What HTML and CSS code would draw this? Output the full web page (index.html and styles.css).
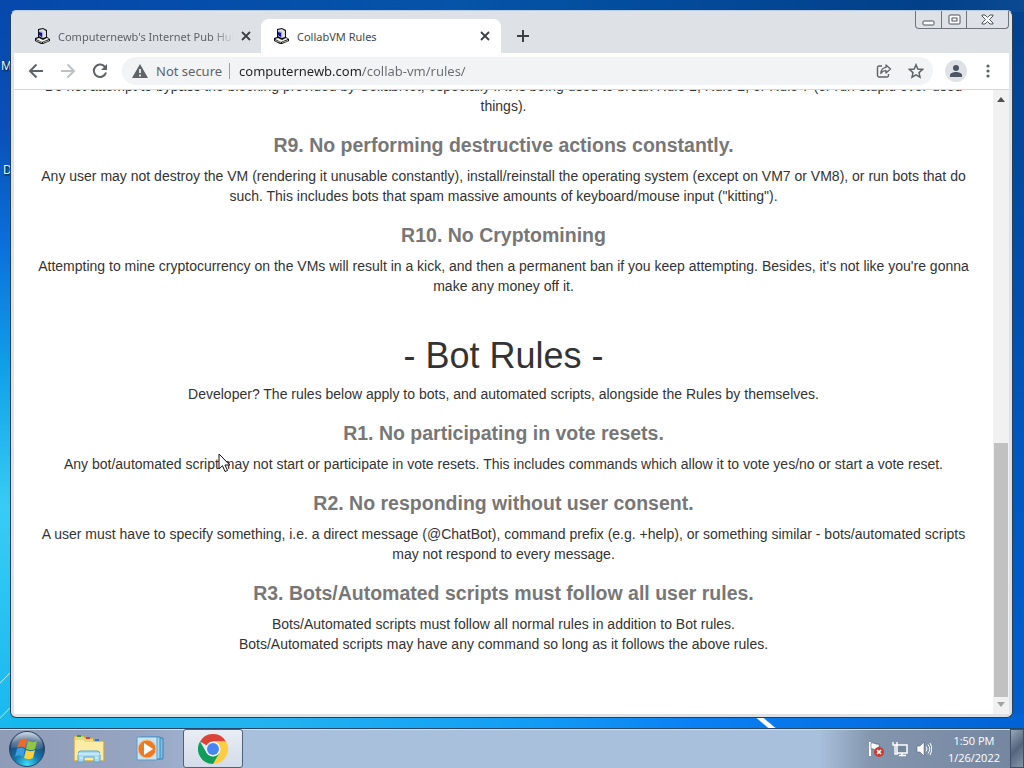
FILE: index.html
```
<!DOCTYPE html>
<html lang="en">
<head>
    <meta charset="UTF-8">
    <meta name="viewport" content="width=device-width, initial-scale=1.0">
    <title>CollabVM Rules</title>
    <link rel="stylesheet" href="styles.css">
</head>
<body>
    <svg width="0" height="0" class="defs" aria-hidden="true">
        <symbol id="pc" viewBox="0 0 16 16">
            <path d="M4 1l5-1 4 2v7l3 2v2l-7 3h-2l-6-3v-3l3-1z" fill="#111"/>
            <path d="M5 2l4-1 3 2v6l-3 1-4-2z" fill="#dcdce4"/>
            <path d="M5 3l4 1v6L5 8z" fill="#a8aad0"/>
            <path d="M5 4l3 1v4L5 7z" fill="#1010a8"/>
            <path d="M2 11l3-1 4 2 4-2 2 1-7 3z" fill="#f4f4f0"/>
            <path d="M2 12l6 2v1l-6-2zM9 14l6-2v1l-6 2z" fill="#b4b4ae"/>
        </symbol>
        <symbol id="close" viewBox="0 0 10 10">
            <path d="M1 1l8 8M9 1L1 9" stroke="#3c4043" stroke-width="1.8"/>
        </symbol>
    </svg>

    <span class="deskLabel labelTop">My</span>
    <span class="deskLabel labelLow">Do</span>

    <div class="window">
        <header class="tabStrip">
            <div class="tab">
                <svg class="favicon"><use href="#pc"/></svg>
                <span class="tabTitle">Computernewb's Internet Pub Hub</span>
                <button class="tabClose" aria-label="Close tab"><svg width="10" height="10"><use href="#close"/></svg></button>
            </div>
            <div class="tab active">
                <svg class="favicon"><use href="#pc"/></svg>
                <span class="tabTitle">CollabVM Rules</span>
                <button class="tabClose" aria-label="Close tab"><svg width="10" height="10"><use href="#close"/></svg></button>
            </div>
            <button class="newTab" aria-label="New tab">
                <svg width="12" height="12" viewBox="0 0 12 12"><path d="M6 0v12M0 6h12" stroke="#3c4043" stroke-width="2"/></svg>
            </button>
            <div class="caption">
                <button aria-label="Minimize"><svg width="13" height="17"><rect x="1" y="10" width="11" height="4" rx="1" fill="#fff" stroke="#4c535c"/></svg></button>
                <button aria-label="Maximize"><svg width="13" height="17"><rect x="1" y="4" width="11" height="9" rx="1" fill="#fff" stroke="#4c535c"/><rect x="4" y="7" width="5" height="3" fill="#fff" stroke="#4c535c"/></svg></button>
                <button class="wide" aria-label="Close"><svg width="13" height="17"><path d="M1 4h3l2.500 2.500L9 4h3v1L8.500 8.500 12 12v1H9l-2.500-2.500L4 13H1v-1l3.500-3.500L1 5z" fill="#fff" stroke="#4c535c"/></svg></button>
            </div>
        </header>

        <nav class="toolbar">
            <button aria-label="Back"><svg width="16" height="16" viewBox="0 0 16 16"><path d="M15 8H2M8.500 1.500L2 8l6.500 6.500" fill="none" stroke="#5f6368" stroke-width="2"/></svg></button>
            <button aria-label="Forward"><svg width="16" height="16" viewBox="0 0 16 16"><path d="M1 8h13M7.500 1.500L14 8l-6.500 6.500" fill="none" stroke="#bdc1c6" stroke-width="2"/></svg></button>
            <button aria-label="Reload"><svg width="16" height="16" viewBox="0 0 16 16"><path d="M13.300 4.500A6.200 6.200 0 1 0 14 9.500" fill="none" stroke="#5f6368" stroke-width="2"/><path d="M15 1v6H9z" fill="#5f6368"/></svg></button>
            <div class="omnibox">
                <svg width="16" height="14" viewBox="0 0 16 14"><path d="M8 0l8 14H0z" fill="#5f6368"/><path d="M8 5v4M8 10.500v2" stroke="#fff" stroke-width="1.600"/></svg>
                <label class="secure" for="url">Not secure</label>
                <input type="text" id="url" value="computernewb.com/collab-vm/rules/">
                <button aria-label="Share"><svg width="16" height="16" viewBox="0 0 16 16"><path d="M6 3H3a1.500 1.500 0 0 0-1.500 1.500v8A1.500 1.500 0 0 0 3 14h8a1.500 1.500 0 0 0 1.500-1.500V11" fill="none" stroke="#5f6368" stroke-width="1.400"/><path d="M10 2l4.500 4L10 10V7.700C7.500 7.700 6 8.600 4.800 10.500 5 7.500 6.500 4.800 10 4.400z" fill="none" stroke="#5f6368" stroke-width="1.300" stroke-linejoin="round"/></svg></button>
                <button aria-label="Bookmark this tab"><svg width="16" height="16" viewBox="0 0 16 16"><path d="M8 1.800l1.800 4.300 4.700.4-3.500 3.100 1 4.600L8 11.800l-4 2.400 1-4.600L1.500 6.500l4.700-.4z" fill="none" stroke="#5f6368" stroke-width="1.500"/></svg></button>
            </div>
            <button class="avatar" aria-label="Profile"><svg width="22" height="22" viewBox="0 0 22 22"><circle cx="11" cy="11" r="11" fill="#dee1e6"/><circle cx="11" cy="8" r="3" fill="#4b5563"/><path d="M5 17v-2c0-2 3.500-3 6-3s6 1 6 3v2z" fill="#4b5563"/></svg></button>
            <button aria-label="Menu"><svg width="4" height="16" viewBox="0 0 4 16"><g fill="#5f6368"><circle cx="2" cy="3" r="1.600"/><circle cx="2" cy="8" r="1.600"/><circle cx="2" cy="13" r="1.600"/></g></svg></button>
        </nav>

        <div class="viewport">
            <main class="content">
                <p>Do not attempt to bypass the blocking provided by CollabNet, especially if it is being used to break Rule 1, Rule 2, or Rule 7 (or run stupid over-used things).</p>
                <h2><small>R9. No performing destructive actions constantly.</small></h2>
                <p>Any user may not destroy the VM (rendering it unusable constantly), install/reinstall the operating system (except on VM7 or VM8), or run bots that do such. This includes bots that spam massive amounts of keyboard/mouse input ("kitting").</p>
                <h2><small>R10. No Cryptomining</small></h2>
                <p>Attempting to mine cryptocurrency on the VMs will result in a kick, and then a permanent ban if you keep attempting. Besides, it's not like you're gonna make any money off it.</p>
                <h1>- Bot Rules -</h1>
                <p>Developer? The rules below apply to bots, and automated scripts, alongside the Rules by themselves.</p>
                <h2><small>R1. No participating in vote resets.</small></h2>
                <p>Any bot/automated script may not start or participate in vote resets. This includes commands which allow it to vote yes/no or start a vote reset.</p>
                <h2><small>R2. No responding without user consent.</small></h2>
                <p>A user must have to specify something, i.e. a direct message (@ChatBot), command prefix (e.g. +help), or something similar - bots/automated scripts may not respond to every message.</p>
                <h2><small>R3. Bots/Automated scripts must follow all user rules.</small></h2>
                <p>Bots/Automated scripts must follow all normal rules in addition to Bot rules.<br>Bots/Automated scripts may have any command so long as it follows the above rules.</p>
            </main>
            <div class="scrollbar">
                <svg width="8" height="5"><path d="M0 5l4-5 4 5z" fill="#505050"/></svg>
                <div class="track"><div class="thumb"></div></div>
                <svg width="8" height="5"><path d="M0 0l4 5 4-5z" fill="#a3a3a3"/></svg>
            </div>
        </div>
    </div>

    <footer class="taskbar">
        <button class="start" aria-label="Start">
            <svg width="38" height="38" viewBox="0 0 38 38">
                <defs>
                    <radialGradient id="orb" cx=".5" cy=".95" r=".9">
                        <stop offset="0" stop-color="#3fe0fa"/>
                        <stop offset=".4" stop-color="#1477ae"/>
                        <stop offset=".8" stop-color="#1d4470"/>
                        <stop offset="1" stop-color="#6e8ba8"/>
                    </radialGradient>
                    <linearGradient id="gloss" x2="0" y2="1">
                        <stop offset="0" stop-color="#fff" stop-opacity=".6"/>
                        <stop offset="1" stop-color="#fff" stop-opacity=".1"/>
                    </linearGradient>
                </defs>
                <circle cx="19" cy="19" r="17.500" fill="url(#orb)" stroke="#2b4562"/>
                <path d="M3 18a16 16 0 0 1 32 0c-8 4-20-3-32 0z" fill="url(#gloss)"/>
                <path d="M12 10c3-2 5-1 7 0l-2 8c-3-2-5-2-8 0z" fill="#ee6a28"/>
                <path d="M20 11c3 1 5 2 9 0l-2 8c-3 2-6 1-9 0z" fill="#91c644"/>
                <path d="M9 19c3-2 5-1 8 0l-2 8c-3-2-5-2-8 0z" fill="#3b9be4"/>
                <path d="M18 20c3 1 5 2 9 0l-2 8c-4 2-6 1-9 0z" fill="#fcd03c"/>
            </svg>
        </button>
        <button class="task" aria-label="Windows Explorer">
            <svg width="34" height="30" viewBox="0 0 34 30">
                <path d="M2 2h10l1 2h8l1 3h10v20H2z" fill="#eed87c" stroke="#c3a24b"/>
                <path d="M3 6h8l2 2h18v18H3z" fill="#faeca4"/>
                <path d="M5 2h4" stroke="#2f9d3b" stroke-width="2"/>
                <path d="M14 4h4" stroke="#cf4327" stroke-width="2"/>
                <path d="M23 6h4" stroke="#3277ca" stroke-width="2"/>
                <path d="M6 28v-8q0-3 3-3h16q3 0 3 3v8h-6v-5H12v5z" fill="#a6daf1" stroke="#5aa5cf"/>
                <path d="M5 20h24M8 24h3M23 24h3" stroke="#e5f7ff"/>
            </svg>
        </button>
        <button class="task" aria-label="Windows Media Player">
            <svg width="30" height="28" viewBox="0 0 30 28">
                <path d="M8 3h19v21H8z" fill="#7fc0e6" stroke="#3c83b8"/>
                <path d="M5 2h19v22H5z" fill="#a3d7f2" stroke="#3c83b8"/>
                <path d="M1 2h20v23H1z" fill="#c5e6f6" stroke="#5b9cc8"/>
                <circle cx="11" cy="14" r="9" fill="#ee7b23" stroke="#f8bd88"/>
                <path d="M8 8l9 6-9 6z" fill="#fff"/>
            </svg>
        </button>
        <button class="task open" aria-label="Google Chrome">
            <svg width="30" height="30" viewBox="0 0 30 30">
                <path d="M15 15L2 7.500A15 15 0 0 1 28 7.500H15z" fill="#dc4437"/>
                <path d="M15 7.500h13A15 15 0 0 1 15 30l6.500-11.200z" fill="#fdcd41"/>
                <path d="M2 7.500A15 15 0 0 0 15 30l6.500-11.200L15 22.500 8.500 18.800z" fill="#109d59"/>
                <circle cx="15" cy="15" r="7.500" fill="#f3f4f5"/>
                <circle cx="15" cy="15" r="6" fill="#4586f3"/>
            </svg>
        </button>

        <div class="tray">
            <svg width="16" height="16" viewBox="0 0 16 16">
                <path d="M2 1v14" stroke="#fff" stroke-width="2"/>
                <path d="M3 2c3-1 4 2 8 1v6c-4 1-5-2-8-1z" fill="#fff" stroke="#4b566b" stroke-width=".6"/>
                <circle cx="11" cy="11" r="5" fill="#cf3a2e"/>
                <path d="M9 9l4 4M13 9l-4 4" stroke="#fff" stroke-width="1.600"/>
            </svg>
            <svg width="16" height="16" viewBox="0 0 16 16">
                <path d="M5 4h10v8H5zM7 14.500h7M10 12v3" fill="#74869b" stroke="#fff" stroke-width="1.500"/>
                <path d="M1 1v3h4V1M3 4v9h3" fill="none" stroke="#fff" stroke-width="1.400"/>
            </svg>
            <svg width="16" height="16" viewBox="0 0 16 16">
                <path d="M1 5h3l4-4v14l-4-4H1z" fill="#fff" stroke="#4b566b" stroke-width=".5"/>
                <path d="M10 5.500q2 2.500 0 5M12 3.500q3.500 4.500 0 9M14 2q3.500 6 0 12" fill="none" stroke="#fff"/>
            </svg>
        </div>
        <div class="clock">
            <time>1:50 PM</time>
            <time>1/26/2022</time>
        </div>
        <button class="showDesktop" aria-label="Show desktop"></button>
    </footer>

    <svg class="cursor" width="13" height="20" viewBox="0 0 13 20">
        <path d="M1 1v15l3.500-3.300L7 18.500l2.500-1L7 12h4.800z" fill="#fff" stroke="#111"/>
    </svg>
</body>
</html>
```

FILE: styles.css
```
*{
    box-sizing: border-box;
}

body{
    margin: 0;
    height: 100vh;
    display: flex;
    flex-direction: column;
    overflow: hidden;
    position: relative;
    font-family: "Open Sans", "Noto Sans", sans-serif;
    font-size: 12px;
    /* light streaks first, then the left, bottom and top edges */
    background:
        linear-gradient(40deg, transparent 40%, #fff 44%, #fff 56%, transparent 60%) left 752px bottom 38px / 28px 14px no-repeat,
        linear-gradient(135deg, transparent 46%, #a8e8fa 48%, #a8e8fa 52%, transparent 54%) left bottom 84px / 12px 14px no-repeat,
        linear-gradient(135deg, transparent 46%, #a4e08c 48%, #a4e08c 52%, transparent 54%) left bottom 48px / 12px 16px no-repeat,
        linear-gradient(#0648ac, #0a50b8 17%, #0a70dc 32%, #10a0e8 48%, #38ccf4 66%, #12b4ee) left top / 12px 100% no-repeat,
        linear-gradient(to right, #12b8ee, #22b4f0 25%, #129ff5 50%, #0a80f4 68%, #0062d4) left bottom / 100% 54px no-repeat,
        linear-gradient(to right, #0648ac, #0454a8 45%, #02408a 90%, #0a4a92) left top / 100% 12px no-repeat,
        linear-gradient(#04408c, #0058c0 60%, #0060d0);
}

button{
    margin: 0;
    padding: 0;
    border: 0;
    background: none;
    display: flex;
    align-items: center;
    justify-content: center;
    flex: none;
}

svg{
    display: block;
    flex: none;
}

.defs{
    position: absolute;
}

/* desktop icon captions, mostly hidden behind the window */
.deskLabel{
    position: absolute;
    color: #fff;
    text-shadow: 1px 1px 2px #000;
}

.labelTop{
    left: 1px;
    top: 57px;
}

.labelLow{
    left: 3px;
    top: 161px;
}

/* browser window */
.window{
    position: relative;
    flex: 1;
    min-height: 0;
    margin: 10px 11px 10px 10px;
    padding: 0 3px 3px;
    display: flex;
    flex-direction: column;
    background: #dee1e6;
    border: 1px solid #26415c;
    border-top-color: #b9cbe0;
    border-radius: 6px;
}

.tabStrip{
    display: flex;
    align-items: flex-end;
    height: 42px;
}

.tab{
    width: 240px;
    height: 34px;
    padding: 0 10px 0 12px;
    display: flex;
    align-items: center;
    color: #5f6368;
}

.tab:first-child{
    margin-left: 8px;
}

.tab:first-child .tabTitle{
    -webkit-mask-image: linear-gradient(to right, #000 88%, transparent);
    mask-image: linear-gradient(to right, #000 88%, transparent);
}

.tab.active{
    background: #fff;
    border-radius: 8px 8px 0 0;
    color: #45494d;
    margin-left: -1px;
}

.favicon{
    width: 16px;
    height: 16px;
}

.tabTitle{
    flex: 1;
    margin: 0 6px 0 8px;
    overflow: hidden;
    white-space: nowrap;
    font-family: "Noto Sans", "Open Sans", sans-serif;
    font-size: 11px;
}

.tabClose{
    width: 12px;
    height: 16px;
}

.newTab{
    width: 28px;
    height: 34px;
    margin-left: 8px;
}

.caption{
    display: flex;
    align-self: flex-start;
    margin-left: auto;
    border: 1px solid #70757d;
    border-top: 0;
    border-radius: 0 0 4px 4px;
}

.caption button{
    width: 25px;
    height: 17px;
}

.caption button + button{
    border-left: 1px solid #70757d;
}

.caption .wide{
    width: 42px;
}

.toolbar{
    display: flex;
    align-items: center;
    gap: 16px;
    height: 37px;
    padding: 0 19px 0 14px;
    background: #fff;
    border-bottom: 1px solid #d5d7da;
}

.omnibox{
    flex: 1;
    height: 28px;
    display: flex;
    align-items: center;
    gap: 16px;
    margin-left: -2px;
    padding: 0 9px 0 10px;
    background: #f1f3f4;
    border-radius: 14px;
    font-family: "Noto Sans", "Open Sans", sans-serif;
    font-size: 13px;
    color: #5f6368;
}

.secure{
    margin-left: -8px;
    padding-right: 7px;
    border-right: 1px solid #9aa0a6;
    line-height: 16px;
}

/* host dark, path grey */
#url{
    flex: 1;
    min-width: 0;
    margin-left: -7px;
    padding: 0;
    border: 0;
    outline: 0;
    font: inherit;
    background: linear-gradient(to right, #202124 122px, #686c70 122px);
    -webkit-background-clip: text;
    background-clip: text;
    -webkit-text-fill-color: transparent;
}

.avatar{
    margin: 0 3px 0 -4px;
}

.viewport{
    flex: 1;
    min-height: 0;
    display: flex;
    overflow: hidden;
    background: #fff;
}

/* page is scrolled to its end */
.content{
    flex: 1;
    display: flex;
    flex-direction: column;
    justify-content: flex-end;
    padding: 0 20px 60px;
    font-family: "Liberation Sans", Arial, sans-serif;
    font-size: 14px;
    line-height: 20px;
    color: #333;
    text-align: center;
}

.content p{
    margin: 0;
}

.content h2{
    margin: 18px 0 10px;
    font-size: 30px;
    line-height: 22px;
}

.content small{
    display: block;
    font-size: 65%;
    color: #777;
}

.content h1{
    margin: 40px 0 8px;
    font-size: 36px;
    line-height: 40px;
    font-weight: normal;
}

.scrollbar{
    width: 16px;
    display: flex;
    flex-direction: column;
    align-items: center;
    padding: 7px 1px;
    background: #f1f1f1;
}

.track{
    flex: 1;
    width: 100%;
    margin: 5px 0;
    display: flex;
    flex-direction: column;
    justify-content: flex-end;
}

.thumb{
    height: 43%;
    background: #c1c1c1;
}

/* taskbar */
.taskbar{
    height: 40px;
    display: flex;
    align-items: center;
    gap: 2px;
    padding-left: 8px;
    border-top: 1px solid #28466a;
    box-shadow: inset 0 1px #d2dfed;
    background: linear-gradient(to right, #8f9cb8, #96a5c2 14%, #a8c0dc 24%, #a8c0dc 80%, #8496ae 85%, #74869f);
}

.task{
    width: 60px;
    height: 39px;
}

.start{
    margin-right: 11px;
}

.task.open{
    background: linear-gradient(#e9edf4, #d3dce9);
    border: 1px solid #4f627b;
    border-radius: 3px;
}

.tray{
    display: flex;
    gap: 8px;
    margin-left: auto;
}

.clock{
    display: flex;
    flex-direction: column;
    align-items: center;
    margin: 0 8px 0 14px;
    font-size: 11px;
    line-height: 17px;
    color: #fff;
}

.showDesktop{
    width: 14px;
    height: 39px;
    border: 1px solid #3e5068;
    background: linear-gradient(135deg, #99a8b9, #53657c 50%, #8595a9);
}

.cursor{
    position: absolute;
    left: 218px;
    top: 453px;
}
```
